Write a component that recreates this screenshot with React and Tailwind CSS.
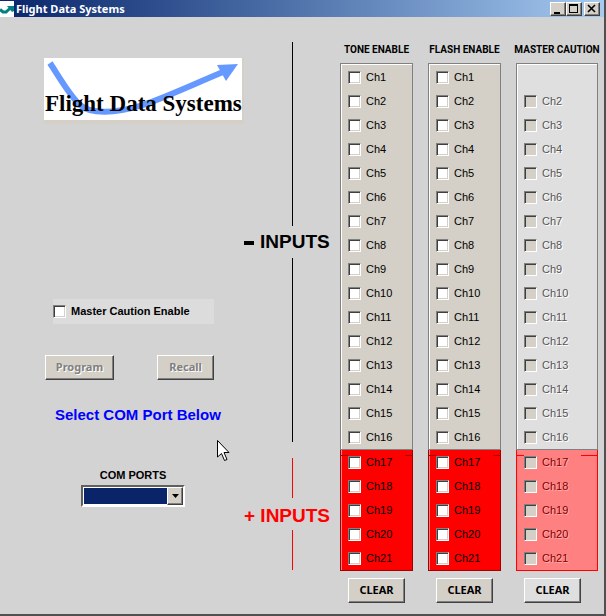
import clsx from 'clsx'

const CHANNELS = Array.from({ length: 21 }, (_, i) => i + 1)

const COLUMNS = [
  { id: 'tone', title: 'TONE ENABLE' },
  { id: 'flash', title: 'FLASH ENABLE' },
  { id: 'caution', title: 'MASTER CAUTION', disabled: true }
]

const checkboxClass =
  'appearance-none size-[13px] shrink-0 bg-white border border-t-[#808080] border-l-[#808080] border-b-white border-r-white shadow-[inset_1px_1px_0_#404040,inset_-1px_-1px_0_#d4d0c8] disabled:bg-[#d4d0c8]'

const raisedClass =
  'border border-t-white border-l-white border-b-[#404040] border-r-[#404040] shadow-[inset_-1px_-1px_0_#808080]'

function TitleBar() {
  return (
    <header className="flex h-[17px] items-center bg-linear-to-r from-[#0a246a] to-[#a6caf0] pr-1">
      <svg width="14" height="16" viewBox="0 0 14 16" className="shrink-0">
        <rect width="14" height="16" fill="#fff" />
        <path d="M0 8.500 L3 11 H6 L11 6.500" fill="none" stroke="#008080" strokeWidth="3" />
        <path d="M7 5 H14 V10 L12 11 Z" fill="#008080" />
      </svg>
      <h1 className="ml-0.5 flex-1 font-['Noto_Sans',sans-serif] text-[11px] leading-4 font-bold text-white">
        Flight Data Systems
      </h1>
      <div className="flex">
        <button aria-label="Minimize" className={clsx(raisedClass, 'h-3.5 w-4 bg-[#d4d0c8]')}>
          <svg width="14" height="12" viewBox="0 0 14 12">
            <path d="M3 9h6v2H3z" />
          </svg>
        </button>
        <button aria-label="Maximize" className={clsx(raisedClass, 'h-3.5 w-4 bg-[#d4d0c8]')}>
          <svg width="14" height="12" viewBox="0 0 14 12">
            <path d="M2 1h9v9H2zM3 3v6h7V3z" fillRule="evenodd" />
          </svg>
        </button>
        <button
          aria-label="Close"
          className={clsx(raisedClass, 'ml-0.5 h-3.5 w-4 bg-[#d4d0c8]')}
        >
          <svg width="14" height="12" viewBox="0 0 14 12">
            <path d="M3 2l7 7M10 2l-7 7" stroke="#000" strokeWidth="1.600" />
          </svg>
        </button>
      </div>
    </header>
  )
}

function Logo() {
  return (
    <div className="ml-11 w-[200px] border-r-2 border-b-4 border-[#d4d0c8]">
      <svg
        viewBox="0 0 198 62"
        className="block w-full bg-white"
        role="img"
        aria-label="Flight Data Systems"
      >
        <path
          d="M6 5 C17 22 26 38 36 47 C46 56 70 56 99 47 C125 38 150 26 179 14"
          fill="none"
          stroke="#6699ff"
          strokeWidth="6"
        />
        <path d="M173 7 L194 6 L182 23 Z" fill="#6699ff" />
        <text
          x="1"
          y="53"
          fontFamily="Liberation Serif, serif"
          fontSize="23"
          fontWeight="bold"
        >
          Flight Data Systems
        </text>
      </svg>
    </div>
  )
}

function DisabledButton({ className, children }) {
  return (
    <button
      disabled
      className={clsx(
        raisedClass,
        "h-[25px] bg-[#d4d0c8] font-['Noto_Sans',sans-serif] text-[11px] font-bold text-[#808080] text-shadow-[1px_1px_0_#fff]",
        className
      )}
    >
      {children}
    </button>
  )
}

function ControlPanel() {
  return (
    <section className="flex min-w-[244px] flex-1 flex-col pt-[41px]">
      <Logo />

      <label className="mt-[175px] ml-[53px] flex h-[25px] w-[161px] items-center gap-[5px] bg-[#dcdcdc] text-[11px] font-bold">
        <input type="checkbox" className={checkboxClass} />
        Master Caution Enable
      </label>

      <div className="mt-[31px] ml-[45px] flex w-[169px] justify-between">
        <DisabledButton className="w-[69px]">Program</DisabledButton>
        <DisabledButton className="w-[57px]">Recall</DisabledButton>
      </div>

      <p className="mt-[25px] ml-[55px] text-[15px] leading-5 font-bold text-[#0000ff]">
        Select COM Port Below
      </p>

      <div className="mt-10 ml-[81px] flex w-[104px] flex-col items-center">
        <label htmlFor="com-port" className="text-[11px] leading-5 font-bold">
          COM PORTS
        </label>
        <div className="relative w-full">
          <select
            id="com-port"
            className="block h-[22px] w-full appearance-none border-2 border-t-[#606060] border-l-[#606060] border-b-white border-r-white bg-[#0a246a] text-[11px] text-white shadow-[inset_0_0_0_1px_#fff]"
          />
          <span
            className={clsx(
              raisedClass,
              'pointer-events-none absolute top-0.5 right-0.5 flex h-[18px] w-4 items-center justify-center bg-[#d4d0c8]'
            )}
          >
            <svg width="7" height="4" viewBox="0 0 7 4">
              <path d="M0 0h7L3.500 4z" />
            </svg>
          </span>
        </div>
      </div>
    </section>
  )
}

function InputsAxis() {
  return (
    <section className="flex w-24 shrink-0 flex-col items-center pt-[25px] text-[19px] leading-8 font-bold whitespace-nowrap">
      <div className="h-[184px] w-px bg-black" />
      <h2 className="self-start">
        <span aria-hidden="true" className="mr-1.5 inline-block h-1 w-2.5 bg-black align-middle" />
        INPUTS
      </h2>
      <div className="h-[184px] w-px bg-black" />
      <div className="mt-4 h-10 w-px bg-[#ff0000]" />
      <h2 className="self-start pt-1 leading-7 text-[#ff0000]">+ INPUTS</h2>
      <div className="h-10 w-px bg-[#ff0000]" />
    </section>
  )
}

function Channel({ column, number }) {
  const plus = number > 16
  // master caution has no channel 1
  if (column.disabled && number === 1) return <li className="h-6" />

  return (
    <li className="h-6">
      <label
        className={clsx(
          'flex h-6 items-center gap-[5px] text-[11px]',
          column.disabled && !plus && 'text-[#555] text-shadow-[1px_1px_0_#fff]',
          column.disabled && plus && 'text-[#800000] text-shadow-[1px_1px_0_#ffb0b0]'
        )}
      >
        <input type="checkbox" disabled={column.disabled} className={checkboxClass} />
        Ch{number}
      </label>
    </li>
  )
}

function ChannelColumn({ column }) {
  const { title, disabled } = column

  return (
    <section className={clsx('flex shrink-0 flex-col', disabled ? 'w-[82px]' : 'w-[73px]')}>
      <h2 className="flex h-5 items-center justify-center font-['Roboto',sans-serif] text-[10px] font-bold whitespace-nowrap">
        {title}
      </h2>
      <ul
        className={clsx(
          'mt-1 border border-[#808080] px-[7px] pt-px shadow-[inset_1px_1px_0_#fff]',
          disabled ? 'bg-[#dfdfdf]' : 'bg-[#d4d0c8]'
        )}
      >
        {CHANNELS.slice(0, 16).map((n) => (
          <Channel key={n} column={column} number={n} />
        ))}
      </ul>
      {/* the group frame is only visible beside the channel boxes */}
      <ul
        className={clsx(
          'relative border border-t-0 px-[7px] before:absolute before:top-[5px] before:left-0 before:h-px before:w-[7px] after:absolute after:top-[5px] after:right-0 after:h-px',
          disabled
            ? 'border-[#ff0000] bg-[#ff8080] before:bg-[#ff0000] after:w-4 after:bg-[#ff0000]'
            : 'border-[#a00000] bg-[#ff0000] shadow-[inset_1px_0_0_#ff8080] before:bg-[#a00000] after:w-[7px] after:bg-[#a00000]'
        )}
      >
        {CHANNELS.slice(16).map((n) => (
          <Channel key={n} column={column} number={n} />
        ))}
      </ul>
      <button
        className={clsx(
          raisedClass,
          "mt-[7px] ml-2 h-[25px] w-[57px] font-['Noto_Sans',sans-serif] text-[11px] font-bold",
          disabled ? 'bg-[#dfdfdf]' : 'bg-[#d4d0c8]'
        )}
      >
        CLEAR
      </button>
    </section>
  )
}

function Pointer() {
  return (
    <svg
      width="13"
      height="21"
      viewBox="0 0 13 21"
      className="pointer-events-none absolute top-[440px] left-[217px]"
      aria-hidden="true"
    >
      <path
        d="M.5 .5V17L4.500 13.500L7.500 20.500L10 19.500L7 12.500H12Z"
        fill="#fff"
        stroke="#000"
      />
    </svg>
  )
}

export default function App() {
  return (
    <div className="relative flex min-h-screen flex-col border-r-2 border-b-2 border-[#505050] bg-[#d3d3d3] font-['Liberation_Sans',Arial,sans-serif] text-black">
      <TitleBar />
      <main className="flex flex-1 pr-1.5">
        <ControlPanel />
        <InputsAxis />
        <div className="flex gap-[15px] pt-[22px]">
          {COLUMNS.map((column) => (
            <ChannelColumn key={column.id} column={column} />
          ))}
        </div>
      </main>
      <Pointer />
    </div>
  )
}
